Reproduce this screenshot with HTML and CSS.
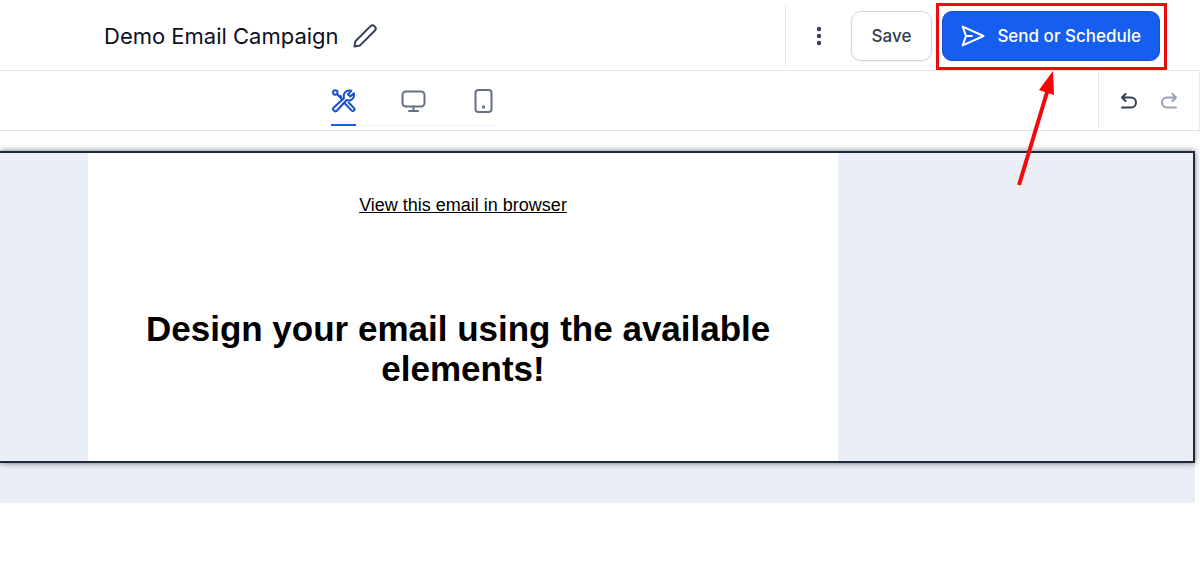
FILE: index.html
```
<!DOCTYPE html>
<html lang="en">
<head>
    <meta charset="UTF-8">
    <meta name="viewport" content="width=device-width, initial-scale=1.0">
    <title>Demo Email Campaign</title>
    <link rel="stylesheet" href="styles.css">
</head>
<body>
    <header class="header">
        <div class="campaign">
            <h1>Demo Email Campaign</h1>
            <button class="icon-button edit" aria-label="Rename campaign">
                <svg width="24" height="24" viewBox="0 0 24 24">
                    <path d="M1.5 22.5 L2.4 17.2 L17.3 2.4 A3.1 3.1 0 0 1 21.7 6.8 L6.8 21.6 Z"/>
                </svg>
            </button>
        </div>
        <div class="actions">
            <button class="icon-button more" aria-label="More options">
                <svg width="6" height="20" viewBox="0 0 6 20">
                    <circle cx="3" cy="3" r="2.2"/>
                    <circle cx="3" cy="10" r="2.2"/>
                    <circle cx="3" cy="17" r="2.2"/>
                </svg>
            </button>
            <button class="button">Save</button>
            <div class="send">
                <button class="button primary">
                    <svg width="24" height="22" viewBox="0 0 24 22">
                        <path d="M5 11 L1.7 1.6 L22.5 11 L1.7 20.4 Z M5 11 H11"/>
                    </svg>
                    Send or Schedule
                </button>
                <div class="highlight"></div>
                <svg class="arrow" width="50" height="120" viewBox="0 0 50 120">
                    <path class="shaft" d="M7 114 L36 18"/>
                    <path class="head" d="M41 0 L27 19 L42 24 Z"/>
                </svg>
            </div>
        </div>
    </header>

    <div class="toolbar">
        <nav class="tabs">
            <button class="tab active" aria-label="Edit">
                <svg width="24" height="24" viewBox="0 0 24 24">
                    <path d="M6.2 5.8 L10.5 10.3"/>
                    <circle cx="3.8" cy="3.5" r="2.2"/>
                    <path d="M19.8 1.8 L16.5 5.2 L18.8 7.5 L22.3 4.2 C23.4 7.6 21.2 11.3 17.5 11.4 C16.6 11.4 15.9 11.3 15.1 11 L5.3 21.7 C3.3 23.6 .2 20.7 2.3 18.5 L12.6 9 C11.1 4.8 14.8 .1 19.8 1.8 Z"/>
                    <path d="M10.5 10.3 L9 6.8 M13.5 14.5 L20.2 21.6 C21.8 23.2 24 20.8 22.5 19.1 L17.2 13.5"/>
                </svg>
            </button>
            <button class="tab" aria-label="Desktop preview">
                <svg width="24" height="24" viewBox="0 0 24 24">
                    <rect x="1" y="2.5" width="22" height="15" rx="3.5"/>
                    <path d="M12 17.5 V21.8 M7.5 22 H16.5"/>
                </svg>
            </button>
            <button class="tab" aria-label="Mobile preview">
                <svg width="24" height="24" viewBox="0 0 24 24">
                    <rect x="4" y="1" width="16" height="22" rx="3"/>
                    <circle cx="12" cy="18" r=".7"/>
                </svg>
            </button>
        </nav>
        <div class="history">
            <button class="icon-button" aria-label="Undo">
                <svg width="16" height="16" viewBox="0 0 16 16">
                    <path d="M4.5 1 L1 4.5 L4.5 8 M1 4.5 H10 A5 5 0 0 1 10 14.5 H1"/>
                </svg>
            </button>
            <button class="icon-button" aria-label="Redo" disabled>
                <svg width="16" height="16" viewBox="0 0 16 16">
                    <path d="M11.5 1 L15 4.5 L11.5 8 M15 4.5 H6 A5 5 0 0 0 6 14.5 H15"/>
                </svg>
            </button>
        </div>
    </div>

    <main class="canvas">
        <section class="block">
            <div class="email">
                <a href="#">View this email in browser</a>
                <h2>Design your email using the available&nbsp;<br>elements!</h2>
            </div>
        </section>
    </main>
</body>
</html>
```

FILE: styles.css
```
* {
    box-sizing: border-box;
}

body, h1, h2, button {
    margin: 0;
    padding: 0;
}

body {
    font-family: Inter, sans-serif;
    background-color: #fff;
}

button {
    font-family: inherit;
    background: none;
    border: none;
    cursor: pointer;
}

svg {
    display: block;
    fill: none;
    stroke: currentColor;
    stroke-width: 2;
    stroke-linecap: round;
    stroke-linejoin: round;
}

.icon-button {
    color: #344054;
}

/* Header */
.header {
    display: flex;
    justify-content: space-between;
    height: 71px;
    padding: 5px 40px 3px 104px;
    border-bottom: 1px solid #e8e8ea;
}

.campaign {
    display: flex;
    align-items: center;
    gap: 14px;
}

.campaign h1 {
    font-size: 22px;
    font-weight: 400;
    line-height: 32px;
    color: #0c111d;
}

.actions {
    display: flex;
    align-items: center;
    border-left: 1px solid #e8e8ea;
}

.more {
    padding: 0 29px 0 30px;
}

.more svg {
    fill: currentColor;
    stroke: none;
}

.button {
    display: flex;
    align-items: center;
    gap: 12px;
    height: 50px;
    padding: 0 20px;
    border: 1px solid #d0d5dd;
    border-radius: 10px;
    font-size: 17px;
    font-weight: 500;
    color: #344054;
    box-shadow: 0 1px 2px rgba(16, 24, 40, 0.05);
}

.primary {
    padding: 0 18px;
    background-color: #155eef;
    border-color: #1850c8;
    color: #fff;
}

.send {
    position: relative;
    margin-left: 10px;
}

/* Callout around the send button */
.highlight {
    position: absolute;
    inset: -8px -7px -9px -6px;
    border: 3px solid #e80c0c;
    pointer-events: none;
}

.arrow {
    position: absolute;
    top: 60px;
    left: 70px;
    z-index: 2;
    pointer-events: none;
}

.arrow .shaft {
    stroke: #f00a0a;
    stroke-width: 4;
    stroke-linecap: butt;
}

.arrow .head {
    fill: #f00;
    stroke: none;
}

/* Toolbar */
.toolbar {
    display: flex;
    justify-content: space-between;
    height: 60px;
    padding-left: 331px;
    border-bottom: 1px solid #e0e0e2;
}

.tabs {
    display: flex;
    gap: 45px;
    height: 55px;
    border-bottom: 1px solid #eeeff1;
}

.tab {
    height: 55px;
    padding-top: 6px;
    border-bottom: 2px solid transparent;
    color: #667085;
}

.tab.active {
    border-color: #155eef;
    color: #1550d0;
}

.tab svg {
    width: 25px;
}

.history {
    display: flex;
    align-items: center;
    gap: 24px;
    padding: 0 22px;
    border: solid #e8e8ea;
    border-width: 0 1px;
}

.icon-button:disabled {
    color: #98a2b3;
}

/* Email canvas */
.canvas {
    margin: 20px 5px 0 0;
    padding-bottom: 40px;
    background-color: #eaeef6;
}

.block {
    padding-left: 88px;
    border: 2px solid #1d2939;
    border-left: none;
    background-color: #eaeef6;
    box-shadow: 0 0 6px rgba(16, 24, 40, 0.6);
}

.email {
    max-width: 750px;
    padding: 40px 40px 72px;
    background-color: #fff;
    font-family: "Liberation Sans", Arial, sans-serif;
    text-align: center;
}

.email a {
    font-size: 18px;
    line-height: 24px;
    color: #000;
}

.email h2 {
    margin-top: 92px;
    font-size: 35px;
    line-height: 40px;
    color: #000;
}
```
